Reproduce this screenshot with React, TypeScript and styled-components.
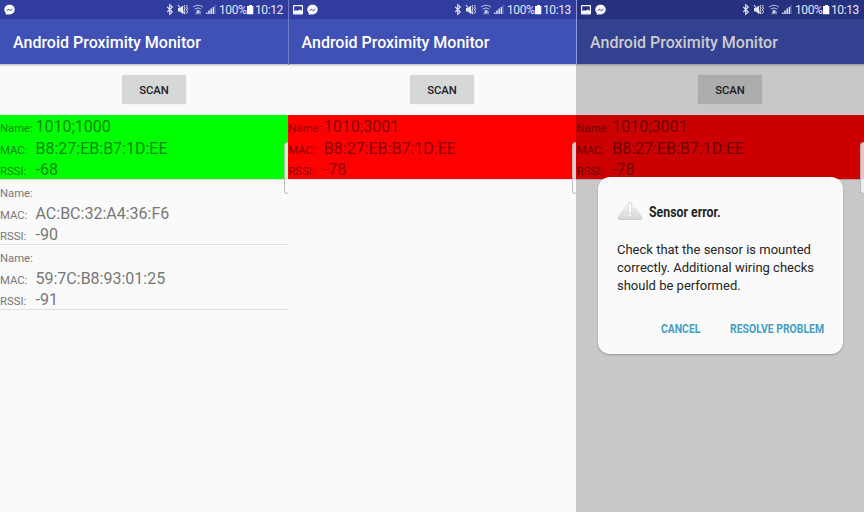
import React from "react";
import styled, { createGlobalStyle } from "styled-components";

const GlobalStyle = createGlobalStyle`
  * { box-sizing: border-box; }
  body { margin: 0; font-family: Roboto, "Liberation Sans", sans-serif; background: #fafafa; overflow: hidden; }
`;

const Board = styled.main`
  display: grid;
  grid-template-columns: repeat(3, 288px);
  width: 864px;
  height: 512px;
  overflow: hidden;
`;

const Phone = styled.section<{ $dim?: boolean }>`
  position: relative;
  display: flex;
  flex-direction: column;
  height: 512px;
  overflow: hidden;
  background: ${(p) => (p.$dim ? "#c8c8c8" : "#fafafa")};
`;

const StatusBar = styled.header<{ $dim?: boolean }>`
  display: flex;
  justify-content: space-between;
  height: 19px;
  padding: 0 5px 0 4px;
  background: ${(p) => (p.$dim ? "#26317e" : "#303d9e")};
  color: #fff;
`;

const Notifications = styled.div<{ $shift: number }>`
  display: flex;
  align-items: center;
  gap: 4px;
  padding-left: ${(p) => p.$shift}px;
  svg { display: block; }
`;

const Indicators = styled.div`
  display: flex;
  align-items: center;
  color: #e4e6f4;
  svg { display: block; }
`;

const StatusText = styled.span<{ $width: number }>`
  width: ${(p) => p.$width}px;
  font-size: 12px;
  line-height: 19px;
  letter-spacing: -0.4px;
  padding-top: 1px;
  white-space: nowrap;
`;

const AppBar = styled.div<{ $dim?: boolean; $indent: number }>`
  position: relative;
  z-index: 1;
  height: 45px;
  padding-left: ${(p) => p.$indent}px;
  background: ${(p) => (p.$dim ? "#334191" : "#4051b5")};
  color: ${(p) => (p.$dim ? "#cccccc" : "#fff")};
  font-size: 16px;
  font-weight: 500;
  line-height: 47px;
  white-space: nowrap;
  box-shadow: 0 1px 2px rgba(0, 0, 0, 0.3);
`;

const ScanArea = styled.div`
  height: 51px;
  padding: 11px 0 0 122px;
`;

const ScanButton = styled.button<{ $dim?: boolean }>`
  display: block;
  width: 64px;
  height: 29px;
  padding: 1px 0 0;
  border: 0;
  border-radius: 2px;
  background: ${(p) => (p.$dim ? "#abadac" : "#d6d8d7")};
  color: ${(p) => (p.$dim ? "#1b1b1b" : "#212121")};
  box-shadow: 0 0 1px rgba(0, 0, 0, 0.25);
  font: 500 11.3px Roboto, sans-serif;
`;

type Tone = "green" | "red" | "darkRed" | "plain";
const tones: Record<Tone, { bg: string; fg: string }> = {
  green: { bg: "#00ff00", fg: "#008a00" },
  red: { bg: "#ff0000", fg: "#8a0000" },
  darkRed: { bg: "#cc0000", fg: "#6e0000" },
  plain: { bg: "transparent", fg: "#777777" },
};

const Device = styled.article<{ $tone: Tone }>`
  height: 65px;
  background: ${(p) => tones[p.$tone].bg};
  color: ${(p) => tones[p.$tone].fg};
  border-bottom: 1px solid ${(p) => (p.$tone === "darkRed" ? "#b4a0a0" : "#dfdfdf")};
`;

const Field = styled.div<{ $inset: number }>`
  display: flex;
  align-items: baseline;
  height: 21.5px;
  padding-left: ${(p) => p.$inset}px;
  line-height: 23px;
  white-space: nowrap;
`;

const Label = styled.span`
  width: 35.5px;
  font-size: 11.3px;
`;

const Value = styled.span`
  font-size: 16px;
`;

const Divider = styled.i<{ $dim?: boolean }>`
  position: absolute;
  z-index: 2;
  left: 0;
  top: 0;
  width: 1px;
  height: 65px;
  background: ${(p) => (p.$dim ? "#8f9be0" : "#6e7ac6")};
`;

const EdgeHandle = styled.i`
  position: absolute;
  z-index: 2;
  right: 0;
  top: 142px;
  width: 4px;
  height: 52px;
  border: 1px solid rgba(170, 170, 170, 0.75);
  border-right: 0;
  border-radius: 4px 0 0 4px;
  background: rgba(250, 250, 250, 0.78);
`;

const Dialog = styled.div`
  position: absolute;
  z-index: 3;
  left: 22px;
  top: 177px;
  display: flex;
  flex-direction: column;
  width: 245px;
  height: 177px;
  padding: 23px 19px 0;
  border-radius: 12px;
  background: #fafafa;
  box-shadow: 0 1px 2px rgba(0, 0, 0, 0.25);
  color: #252525;
`;

const DialogHead = styled.div`
  display: flex;
  align-items: flex-start;
  gap: 6px;
  height: 41px;
  svg { display: block; flex: none; }
`;

const Condensed = styled.span<{ $scale: number }>`
  display: block;
  white-space: nowrap;
  transform: scaleX(${(p) => p.$scale});
`;

const DialogTitle = styled(Condensed)`
  padding-top: 3px;
  transform-origin: left;
  font-size: 14px;
  font-weight: 700;
  line-height: 19px;
`;

const Message = styled.p`
  margin: 0;
  font-size: 13px;
  line-height: 18.2px;
  white-space: pre;
`;

const Actions = styled.div`
  display: grid;
  grid-template-columns: 83px 124px;
  margin-top: 23px;
`;

const Action = styled(Condensed)`
  justify-self: end;
  transform-origin: right;
  color: #479fc0;
  font-size: 12px;
  font-weight: 700;
  line-height: 20px;
`;

const Messenger = () => (
  <svg width="11" height="12" viewBox="0 0 11 12">
    <path d="M5.5 .8C2.5.8.3 2.9.3 5.6c0 1.5.6 2.7 1.6 3.6L1.8 11l1.8-.8c.6.2 1.2.3 1.9.3 3 0 5.2-2.1 5.2-4.9S8.500.8 5.5.8Z" fill="#fff" />
    <path d="m2.400 7 2-2.100 1.700 1.300L8.500 4.700 6.600 6.900 4.900 5.700Z" fill="#303d9e" stroke="#303d9e" strokeWidth=".3" />
  </svg>
);

const Picture = () => (
  <svg width="10" height="10" viewBox="0 0 10 10">
    <rect x=".6" y=".6" width="8.800" height="8.400" rx=".4" fill="none" stroke="#fff" strokeWidth="1.200" />
    <path d="M1 8.800V6.500l2-1.600 1.300 1.200L6.500 4.500 9 6v2.800Z" fill="#fff" />
  </svg>
);

const StatusIcons = () => (
  <svg width="53" height="19" viewBox="0 0 53 19" fill="none" stroke="currentColor">
    <path d="m1.300 7 5 5-2.600 2.300V4.700L6.300 7l-5 5" strokeWidth="1.100" />
    <path d="M12 8h2l3-2.600v8.800L14 11.600h-2Z" fill="currentColor" stroke="none" />
    <path d="m12 5 7 9" strokeWidth="1.100" />
    <path d="m19 5-1 1.500 1 1.500-1 2 1 1.500-1 2M21.500 5l-1 1.500 1 1.500-1 2 1 1.500-1 2" strokeWidth="1" />
    <path d="M27 7q5-3.500 10 0M28.700 9q3.300-2.200 6.600 0M30.300 10.900q1.700-1 3.400 0" strokeWidth="1" opacity=".75" />
    <path d="m32 10.500 1.500 1.800L32 14l-1.500-1.700Z" fill="currentColor" stroke="none" />
    <path d="M30.300 12.500v2M34 11v3.500" strokeWidth=".8" />
    <path d="M40.800 14v-1.500M43 14v-3.500M45.200 14V8.600" strokeWidth="1.500" />
    <path d="M47.400 14V7" strokeWidth="1.500" />
    <path d="M49.100 14V5" strokeWidth="1.100" opacity=".35" />
  </svg>
);

const Battery = () => (
  <svg width="9" height="19" viewBox="0 0 9 19">
    <path d="M3 5h3v1h1.300v8.300H1V6h2Z" fill="#fff" />
  </svg>
);

const Warning = () => (
  <svg width="26" height="21" viewBox="0 0 26 21">
    <defs>
      <linearGradient id="warning" x2="0" y2="1">
        <stop stopColor="#f8f8f8" />
        <stop offset="1" stopColor="#d6d6d6" />
      </linearGradient>
    </defs>
    <path d="M11.500 1.500q1.500-1.500 3 0l10.500 15q1.300 2.700-1.800 3H2.800q-3.100-.3-1.800-3Z" fill="url(#warning)" />
    <path d="M.8 18.300q.5 1.200 2 1.200h20.400q1.500 0 2-1.200" fill="none" stroke="#c5c5c5" strokeWidth=".8" />
    <path d="M13 3.500v8.500" stroke="#cfcfcf" strokeWidth="2.800" strokeLinecap="round" />
    <path d="M13 4v8" stroke="#fff" strokeWidth="2" strokeLinecap="round" />
    <circle cx="13" cy="15.200" r="1.300" fill="#fff" stroke="#cfcfcf" strokeWidth=".3" />
  </svg>
);

interface DeviceData { name: string; mac: string; rssi: string; tone: Tone }
interface ScreenProps {
  time: string;
  devices: DeviceData[];
  picture?: boolean;
  dim?: boolean;
  divider?: boolean;
  indent: number;
  inset: number;
  children?: React.ReactNode;
}

const Screen = ({ time, devices, picture, dim, divider, indent, inset, children }: ScreenProps) => (
  <Phone $dim={dim}>
    {divider && <Divider $dim={dim} />}
    <StatusBar $dim={dim}>
      <Notifications $shift={picture ? (dim ? 1 : 0.5) : 0}>
        {picture && <Picture />}
        <Messenger />
      </Notifications>
      <Indicators>
        <StatusIcons />
        <StatusText $width={27}>100%</StatusText>
        <Battery />
        <StatusText $width={28}>{time}</StatusText>
      </Indicators>
    </StatusBar>
    <AppBar $dim={dim} $indent={indent}>Android Proximity Monitor</AppBar>
    <ScanArea><ScanButton $dim={dim}>SCAN</ScanButton></ScanArea>
    {devices.map((d) => (
      <Device key={d.mac} $tone={d.tone}>
        <Field $inset={inset}><Label>Name:</Label><Value>{d.name}</Value></Field>
        <Field $inset={inset}><Label>MAC:</Label><Value>{d.mac}</Value></Field>
        <Field $inset={inset}><Label>RSSI:</Label><Value>{d.rssi}</Value></Field>
      </Device>
    ))}
    <EdgeHandle />
    {children}
  </Phone>
);

const beacon = "B8:27:EB:B7:1D:EE";

export default function App() {
  return (
    <>
      <GlobalStyle />
      <Board>
        <Screen
          time="10:12"
          indent={13}
          inset={0}
          devices={[
            { name: "1010;1000", mac: beacon, rssi: "-68", tone: "green" },
            { name: "\u00a0", mac: "AC:BC:32:A4:36:F6", rssi: "-90", tone: "plain" },
            { name: "\u00a0", mac: "59:7C:B8:93:01:25", rssi: "-91", tone: "plain" },
          ]}
        />
        <Screen time="10:13" picture divider indent={13.5} inset={0.3}
          devices={[{ name: "1010;3001", mac: beacon, rssi: "-78", tone: "red" }]} />
        <Screen time="10:13" picture divider dim indent={14} inset={0.7}
          devices={[{ name: "1010;3001", mac: beacon, rssi: "-78", tone: "darkRed" }]}>
          <Dialog role="dialog">
            <DialogHead>
              <Warning />
              <DialogTitle $scale={0.88}>Sensor error.</DialogTitle>
            </DialogHead>
            <Message>{"Check that the sensor is mounted\ncorrectly. Additional wiring checks\nshould be performed."}</Message>
            <Actions>
              <Action $scale={0.87}>CANCEL</Action>
              <Action $scale={0.87}>RESOLVE PROBLEM</Action>
            </Actions>
          </Dialog>
        </Screen>
      </Board>
    </>
  );
}
